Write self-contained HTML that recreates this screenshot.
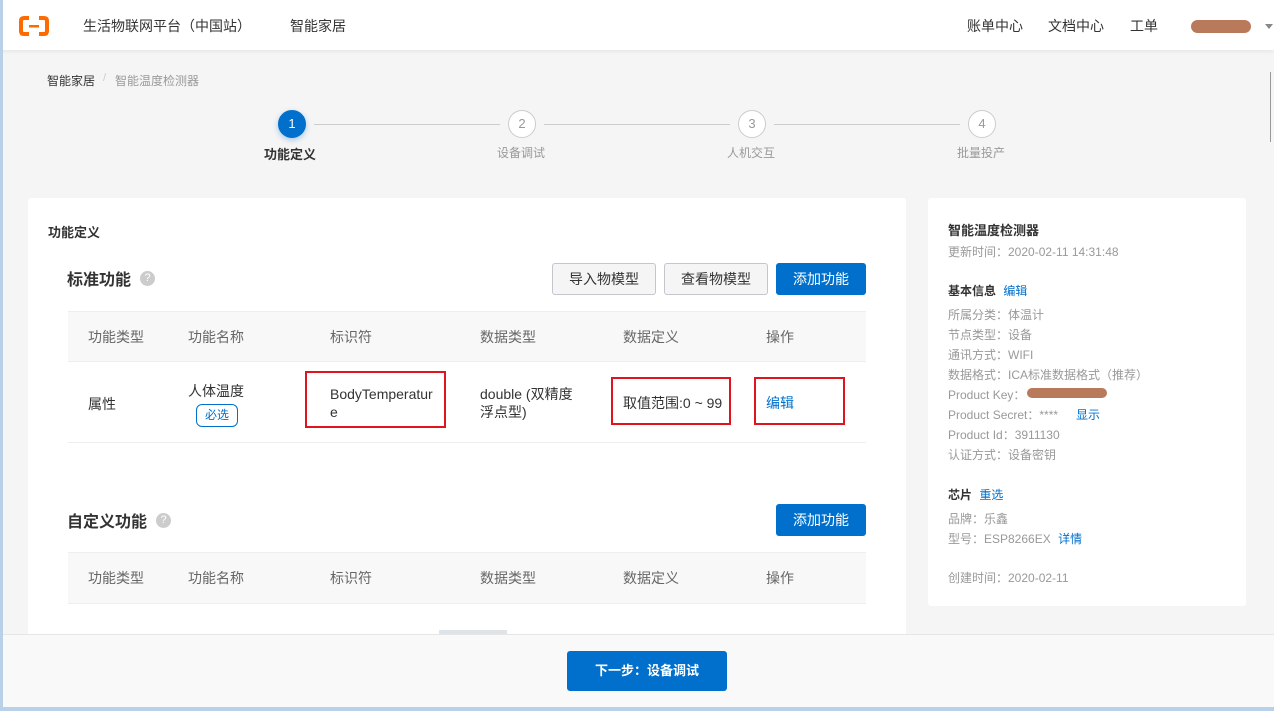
<!DOCTYPE html><html><head><meta charset="utf-8"><style>
*{margin:0;padding:0;box-sizing:border-box}
body{width:1274px;height:711px;overflow:hidden;background:#f5f5f5;font-family:"Liberation Sans","Noto Sans CJK SC",sans-serif;position:relative;color:#333}
.a{position:absolute;white-space:nowrap}
.hdr{left:0;top:0;width:1274px;height:50px;background:#fff;box-shadow:0 2px 4px rgba(0,0,0,.06)}
.circ{width:28px;height:28px;border-radius:50%;border:1px solid #ccc;background:#fff;text-align:center;line-height:26px;font-size:13px;color:#999}
.line{height:1px;background:#ccc}
.card{background:#fff;border-radius:3px}
.btn{height:32px;border:1px solid #c4c6cf;background:#f5f5f5;border-radius:3px;font-size:14px;color:#333;text-align:center;line-height:30px}
.pb{background:#0070cc;color:#fff;border-color:#0070cc}
.th{font-size:14px;color:#666}
.rb{border:2px solid #e0141e}
.g{font-size:12px;color:#999}
.bl{color:#0070cc}
</style></head><body>
<div class="a" style="left:0;top:0;width:3px;height:711px;background:#b8d0e8;z-index:5"></div>
<div class="a" style="left:0;top:707px;width:1274px;height:4px;background:#b8d0e8;z-index:5"></div>
<div class="a hdr"></div>
<svg class="a" style="left:19px;top:16px" width="30" height="20" viewBox="0 0 30 20"><path d="M10 2H5Q2 2 2 5V15Q2 18 5 18H10M20 2H25Q28 2 28 5V15Q28 18 25 18H20" fill="none" stroke="#ff6a00" stroke-width="4"/><rect x="10" y="9" width="10" height="2.5" fill="#ff6a00"/></svg>
<div class="a" style="left:83px;top:16px;font-size:14px">生活物联网平台（中国站）</div>
<div class="a" style="left:290px;top:16px;font-size:14px">智能家居</div>
<div class="a" style="left:967px;top:16px;font-size:14px">账单中心</div>
<div class="a" style="left:1048px;top:16px;font-size:14px">文档中心</div>
<div class="a" style="left:1130px;top:16px;font-size:14px">工单</div>
<div class="a" style="left:1191px;top:20px;width:60px;height:13px;background:#b87a5a;border-radius:7px"></div>
<div class="a" style="left:1265px;top:24px;border:4px solid transparent;border-top:5px solid #888"></div>
<div class="a" style="left:1270px;top:72px;width:1px;height:70px;background:#999"></div>
<div class="a" style="left:47px;top:72px;font-size:12px;color:#333">智能家居</div>
<div class="a" style="left:103px;top:72px;font-size:11px;color:#ccc">/</div>
<div class="a" style="left:115px;top:72px;font-size:12px;color:#999">智能温度检测器</div>
<div class="a circ" style="left:278px;top:110px;background:#0070cc;border-color:#0070cc;color:#fff;box-shadow:0 2px 6px rgba(0,112,204,.35)">1</div>
<div class="a line" style="left:314px;top:124px;width:186px"></div>
<div class="a circ" style="left:508px;top:110px">2</div>
<div class="a line" style="left:544px;top:124px;width:186px"></div>
<div class="a circ" style="left:738px;top:110px">3</div>
<div class="a line" style="left:774px;top:124px;width:186px"></div>
<div class="a circ" style="left:968px;top:110px">4</div>
<div class="a" style="left:264px;top:144px;font-size:13px;font-weight:bold">功能定义</div>
<div class="a" style="left:497px;top:144px;font-size:12px;color:#999">设备调试</div>
<div class="a" style="left:727px;top:144px;font-size:12px;color:#999">人机交互</div>
<div class="a" style="left:957px;top:144px;font-size:12px;color:#999">批量投产</div>
<div class="a card" style="left:28px;top:198px;width:878px;height:450px"></div>
<div class="a" style="left:48px;top:222px;font-size:13px;font-weight:bold">功能定义</div>
<div class="a" style="left:67px;top:266px;font-size:16px;font-weight:bold">标准功能</div>
<div class="a" style="left:140px;top:271px;width:15px;height:15px;border-radius:50%;background:#ccc;color:#fff;font-size:11px;text-align:center;line-height:15px">?</div>
<div class="a btn" style="left:552px;top:263px;width:104px">导入物模型</div>
<div class="a btn" style="left:664px;top:263px;width:104px">查看物模型</div>
<div class="a btn pb" style="left:776px;top:263px;width:90px">添加功能</div>
<div class="a" style="left:68px;top:311px;width:798px;height:51px;background:#f8f8f8;border-top:1px solid #eee;border-bottom:1px solid #eee"></div>
<div class="a th" style="left:88px;top:327px">功能类型</div><div class="a th" style="left:188px;top:327px">功能名称</div><div class="a th" style="left:330px;top:327px">标识符</div><div class="a th" style="left:480px;top:327px">数据类型</div><div class="a th" style="left:623px;top:327px">数据定义</div><div class="a th" style="left:766px;top:327px">操作</div>
<div class="a" style="left:68px;top:442px;width:798px;height:1px;background:#eee"></div>
<div class="a" style="left:88px;top:394px;font-size:14px">属性</div>
<div class="a" style="left:188px;top:381px;font-size:14px">人体温度</div>
<div class="a" style="left:196px;top:404px;width:42px;height:23px;border:1px solid #0070cc;border-radius:6px;color:#0070cc;font-size:12px;text-align:center;line-height:21px">必选</div>
<div class="a rb" style="left:305px;top:371px;width:141px;height:57px"></div>
<div class="a" style="left:330px;top:385px;font-size:14px;line-height:18px">BodyTemperatur<br>e</div>
<div class="a" style="left:480px;top:385px;font-size:14px;line-height:18px">double (双精度<br>浮点型)</div>
<div class="a rb" style="left:611px;top:377px;width:120px;height:48px"></div>
<div class="a" style="left:623px;top:393px;font-size:14px">取值范围:0 ~ 99</div>
<div class="a rb" style="left:754px;top:377px;width:91px;height:48px"></div>
<div class="a bl" style="left:766px;top:393px;font-size:14px">编辑</div>
<div class="a" style="left:67px;top:508px;font-size:16px;font-weight:bold">自定义功能</div>
<div class="a" style="left:156px;top:513px;width:15px;height:15px;border-radius:50%;background:#ccc;color:#fff;font-size:11px;text-align:center;line-height:15px">?</div>
<div class="a btn pb" style="left:776px;top:504px;width:90px">添加功能</div>
<div class="a" style="left:68px;top:552px;width:798px;height:52px;background:#f8f8f8;border-top:1px solid #eee;border-bottom:1px solid #eee"></div>
<div class="a th" style="left:88px;top:568px">功能类型</div><div class="a th" style="left:188px;top:568px">功能名称</div><div class="a th" style="left:330px;top:568px">标识符</div><div class="a th" style="left:480px;top:568px">数据类型</div><div class="a th" style="left:623px;top:568px">数据定义</div><div class="a th" style="left:766px;top:568px">操作</div>
<div class="a card" style="left:928px;top:198px;width:318px;height:408px"></div>
<div class="a" style="left:948px;top:220px;font-size:13px;font-weight:bold">智能温度检测器</div>
<div class="a g" style="left:948px;top:243px">更新时间：2020-02-11 14:31:48</div>
<div class="a" style="left:948px;top:282px;font-size:12px;font-weight:bold">基本信息 <span class="bl" style="font-weight:normal;margin-left:4px">编辑</span></div>
<div class="a g" style="left:948px;top:306px">所属分类：体温计</div>
<div class="a g" style="left:948px;top:326px">节点类型：设备</div>
<div class="a g" style="left:948px;top:346px">通讯方式：WIFI</div>
<div class="a g" style="left:948px;top:366px">数据格式：ICA标准数据格式（推荐）</div>
<div class="a g" style="left:948px;top:386px">Product Key：</div>
<div class="a" style="left:1027px;top:388px;width:80px;height:10px;background:#b87a5a;border-radius:5px"></div>
<div class="a g" style="left:948px;top:406px">Product Secret：****</div>
<div class="a bl" style="left:1076px;top:406px;font-size:12px">显示</div>
<div class="a g" style="left:948px;top:426px">Product Id：3911130</div>
<div class="a g" style="left:948px;top:446px">认证方式：设备密钥</div>
<div class="a" style="left:948px;top:486px;font-size:12px;font-weight:bold">芯片 <span class="bl" style="font-weight:normal;margin-left:4px">重选</span></div>
<div class="a g" style="left:948px;top:510px">品牌：乐鑫</div>
<div class="a g" style="left:948px;top:530px">型号：ESP8266EX <span class="bl" style="margin-left:4px">详情</span></div>
<div class="a g" style="left:948px;top:569px">创建时间：2020-02-11</div>
<div class="a" style="left:3px;top:634px;width:1271px;height:73px;background:#f9f9f9;border-top:1px solid #e6e6e6"></div>
<div class="a" style="left:439px;top:630px;width:68px;height:4px;background:#dde3e6"></div>
<div class="a btn pb" style="left:567px;top:651px;width:160px;height:40px;line-height:38px;font-weight:bold;font-size:13px">下一步：设备调试</div>
</body></html>
